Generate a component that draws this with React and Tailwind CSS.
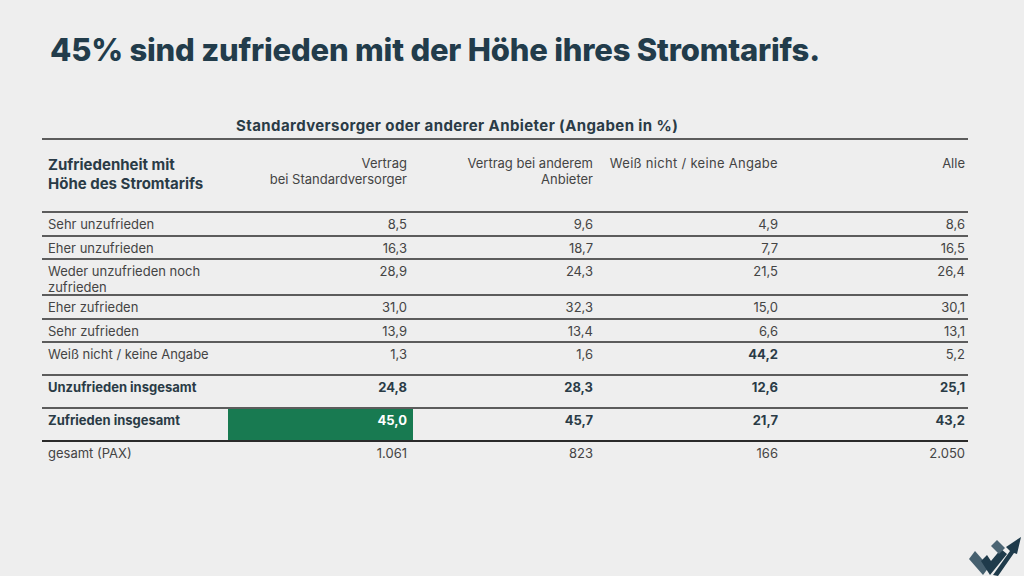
const rows = [
  { label: "Sehr unzufrieden", v: ["8,5", "9,6", "4,9", "8,6"], h: "h-[24px]" },
  { label: "Eher unzufrieden", v: ["16,3", "18,7", "7,7", "16,5"], h: "h-[23px]" },
  { label: "Weder unzufrieden noch zufrieden", v: ["28,9", "24,3", "21,5", "26,4"], h: "h-[36px]" },
  { label: "Eher zufrieden", v: ["31,0", "32,3", "15,0", "30,1"], h: "h-[24px]" },
  { label: "Sehr zufrieden", v: ["13,9", "13,4", "6,6", "13,1"], h: "h-[23px]" },
  { label: "Weiß nicht / keine Angabe", v: ["1,3", "1,6", "44,2", "5,2"], h: "h-[33px]", boldCol: 2 },
  { label: "Unzufrieden insgesamt", v: ["24,8", "28,3", "12,6", "25,1"], h: "h-[33px]", bold: true },
  { label: "Zufrieden insgesamt", v: ["45,0", "45,7", "21,7", "43,2"], h: "h-[33px]", bold: true, green: 0, dark: true },
];

function Logo() {
  return (
    <svg className="absolute left-[964px] top-[526px]" width="60" height="50" viewBox="0 0 60 50">
      <polygon points="5,33 11,25 25,41 19,49" fill="#46606f" />
      <polygon points="17,35 23,29 27,35 37,23 43,28 26,49" fill="#1f3b4b" />
      <polygon points="27,20 33,14 41,22 35,28" fill="#4c6574" />
      <polygon points="29,49 46,25 42,21 57,11 53,28 50,27 34,50" fill="#1f3b4b" />
    </svg>
  );
}

export default function App() {
  return (
    <div
      className="relative w-[1024px] h-[576px] overflow-hidden bg-[#eeeeee]"
      style={{ fontFamily: "Inter, 'Open Sans', sans-serif" }}
    >
      <h1 className="pl-[50px] pt-[32px] text-[31px] leading-[36px] font-extrabold tracking-[-0.2px] text-[#223c4b]">
        45% sind zufrieden mit der Höhe ihres Stromtarifs.
      </h1>

      <div className="ml-[42px] mt-[49px] w-[926px]">
        <div className="pl-[194px] text-[15px] leading-[18px] font-bold tracking-[0.4px] text-[#2a3b46] pb-[3px]">
          Standardversorger oder anderer Anbieter (Angaben in %)
        </div>

        <div className="border-t-2 border-b-2 border-[#5c5c5c] h-[75px] grid grid-cols-[186px_185px_186px_185px_184px] pt-[15px]">
          <div className="pl-[6px] text-[15px] leading-[19px] font-bold text-[#2a3b46]">
            Zufriedenheit mit
            <br />
            Höhe des Stromtarifs
          </div>
          <div className="pr-[6px] text-right text-[13px] leading-[16px] text-[#444]">
            Vertrag
            <br />
            bei Standardversorger
          </div>
          <div className="pr-[6px] text-right text-[13px] leading-[16px] text-[#444]">
            Vertrag bei anderem
            <br />
            Anbieter
          </div>
          <div className="pr-[6px] text-right text-[13px] leading-[16px] text-[#444] whitespace-nowrap tracking-[0.3px]">
            Weiß nicht / keine Angabe
          </div>
          <div className="pr-[3px] text-right text-[13px] leading-[16px] text-[#444]">Alle</div>
        </div>

        {rows.map((r) => (
          <div
            key={r.label}
            className={`grid grid-cols-[186px_185px_186px_185px_184px] border-b-2 ${r.h} ${
              r.dark ? "border-[#2a2a2a]" : "border-[#5c5c5c]"
            }`}
          >
            <div
              className={`pl-[6px] pt-[3px] text-[13px] leading-[16px] ${
                r.bold ? "font-bold text-[#2a3b46]" : "text-[#444]"
              }`}
            >
              {r.label}
            </div>
            {r.v.map((v, i) => (
              <div
                key={i}
                className={`${i === 3 ? "pr-[3px]" : "pr-[6px]"} pt-[3px] text-right text-[13px] leading-[16px] ${
                  r.green === i
                    ? "bg-[#187a51] text-white font-bold"
                    : r.bold || r.boldCol === i
                    ? "font-bold text-[#2a3b46]"
                    : "text-[#444]"
                }`}
              >
                {v}
              </div>
            ))}
          </div>
        ))}

        <div className="grid grid-cols-[186px_185px_186px_185px_184px] h-[24px]">
          <div className="pl-[6px] pt-[3px] text-[13px] leading-[16px] text-[#444]">gesamt (PAX)</div>
          <div className="pr-[6px] pt-[3px] text-right text-[13px] leading-[16px] text-[#444]">1.061</div>
          <div className="pr-[6px] pt-[3px] text-right text-[13px] leading-[16px] text-[#444]">823</div>
          <div className="pr-[6px] pt-[3px] text-right text-[13px] leading-[16px] text-[#444]">166</div>
          <div className="pr-[3px] pt-[3px] text-right text-[13px] leading-[16px] text-[#444]">2.050</div>
        </div>
      </div>

      <Logo />
    </div>
  );
}
